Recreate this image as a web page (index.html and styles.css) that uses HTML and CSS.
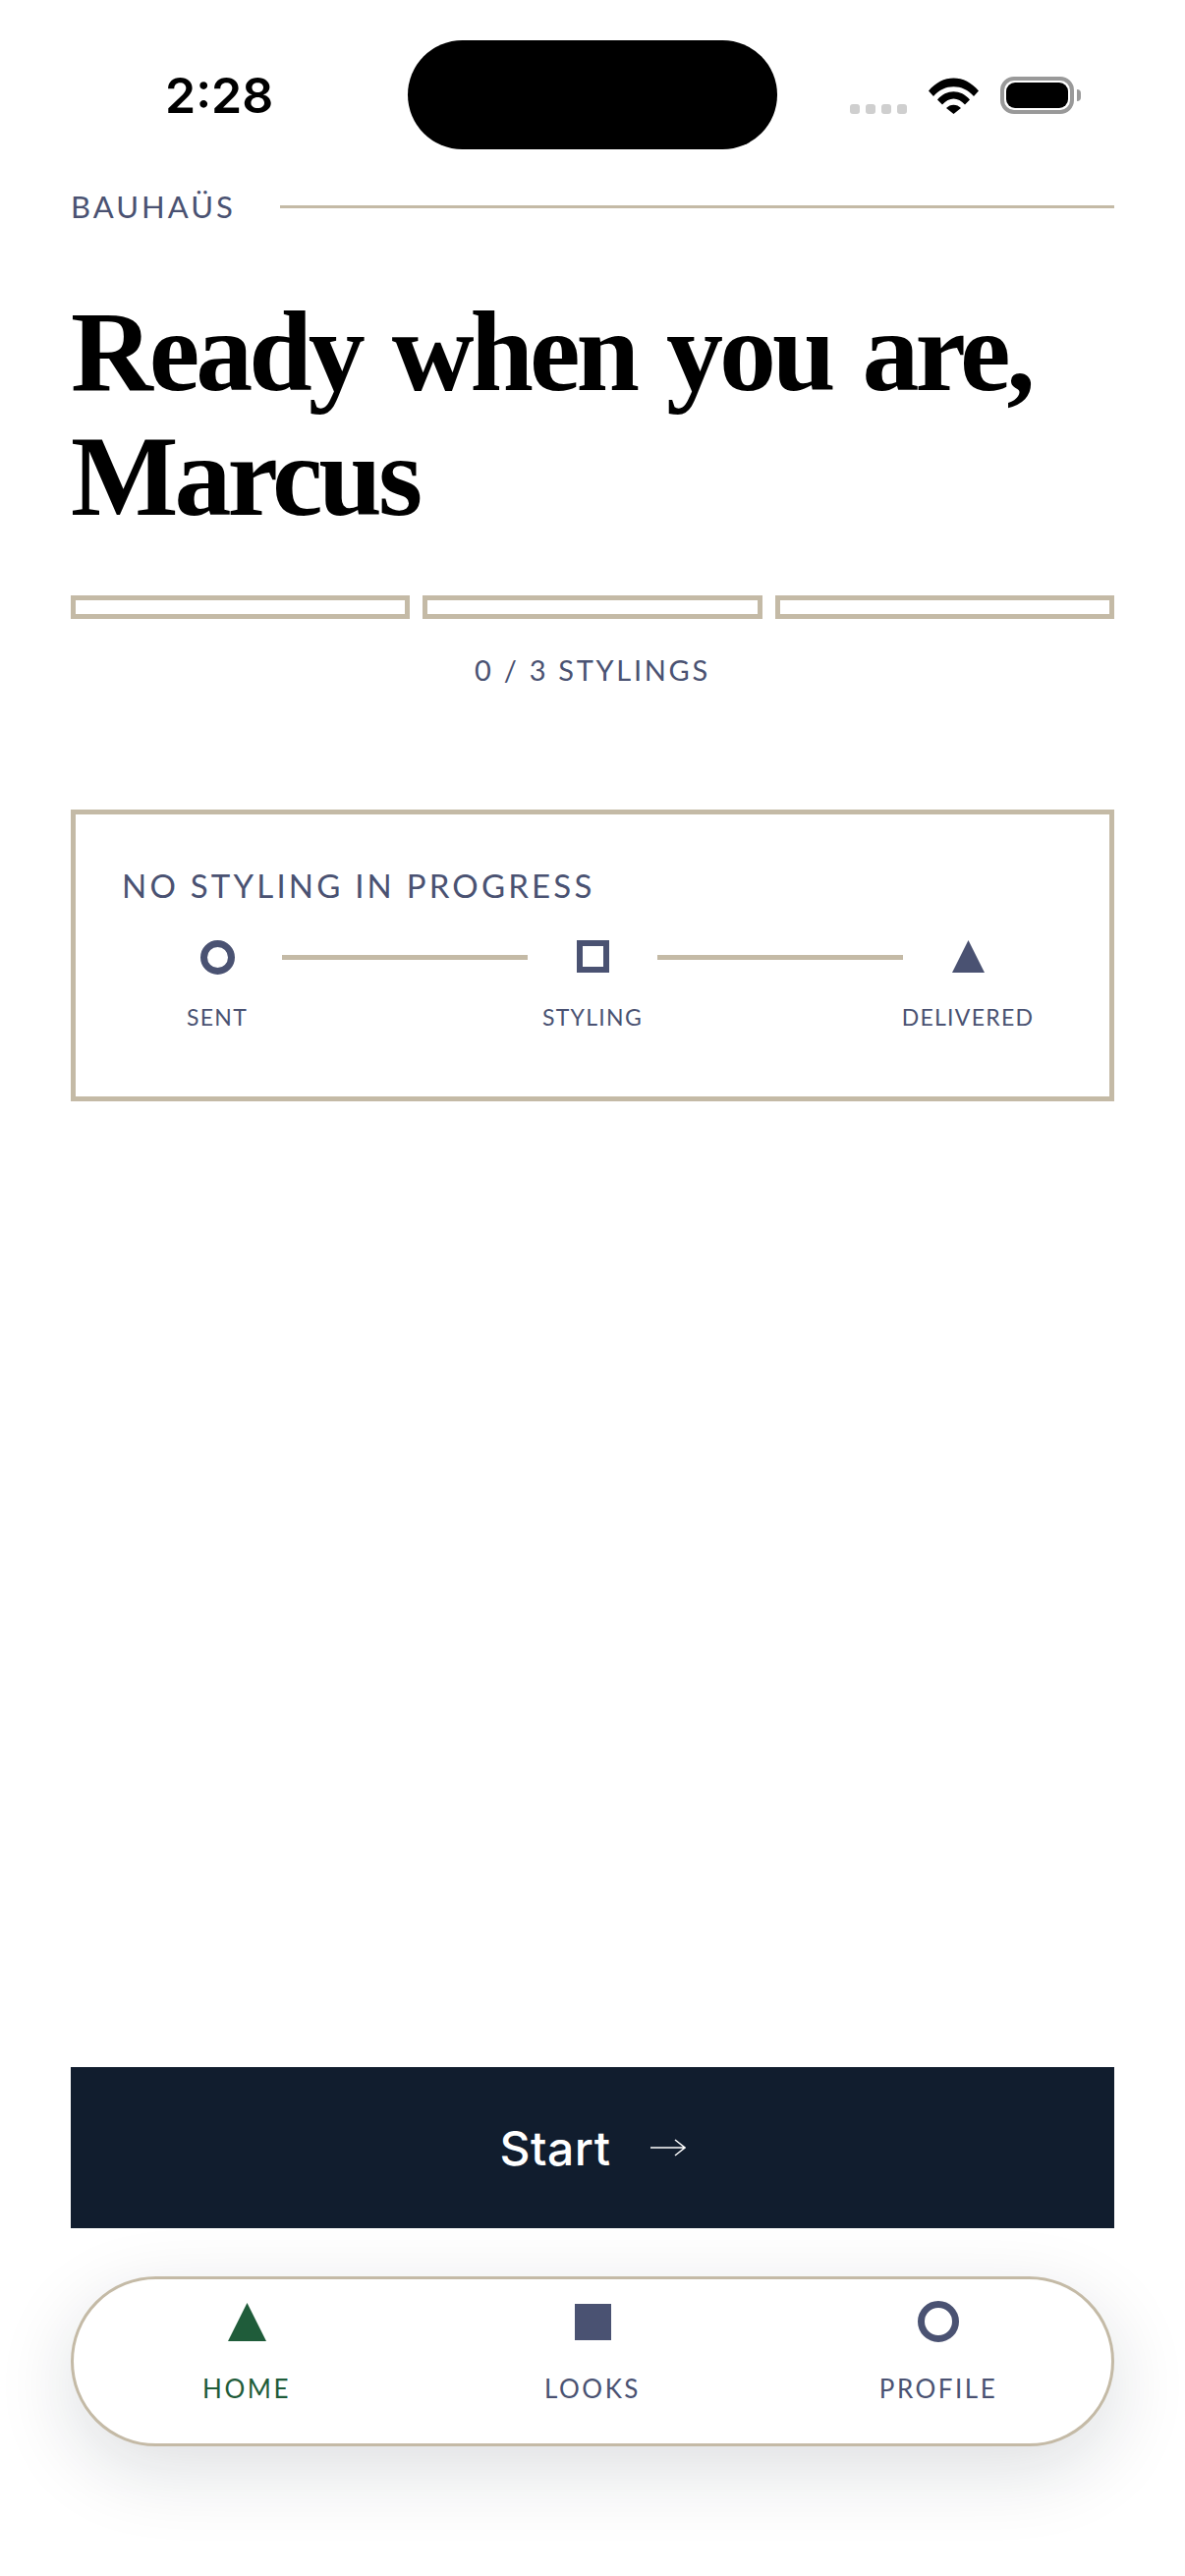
FILE: index.html
```html
<!DOCTYPE html>
<html lang="en">
<head>
    <meta charset="UTF-8">
    <meta name="viewport" content="width=device-width, initial-scale=1.0">
    <title>Bauhaüs</title>
    <link rel="stylesheet" href="styles.css">
</head>
<body>
<div class="status-bar">
    <div class="time">2:28</div>
    <div class="island"></div>
    <div class="status-icons">
        <div class="signal"><span></span><span></span><span></span><span></span></div>
        <svg class="wifi" width="51" height="37" viewBox="0 0 51 37">
            <path d="M0 13.5C14-4 37-4 51 13.5L46 19C35 6 16 6 5 19Z"/>
            <path d="M9 22.5C18 11.500 33 11.500 42 22.500L37 27.500C30 19.500 21 19.500 14 27.500Z"/>
            <path d="M18 31C22 26.500 29 26.500 33 31L25.500 37Z"/>
        </svg>
        <div class="battery"><div class="battery-level"></div></div>
        <div class="battery-cap"></div>
    </div>
</div>

<main class="content">
    <div class="brand">
        <span class="brand-name">BAUHAÜS</span>
        <span class="brand-rule"></span>
    </div>

    <h1>Ready when you are,<br>Marcus</h1>

    <div class="progress">
        <div class="progress-bar"></div>
        <div class="progress-bar"></div>
        <div class="progress-bar"></div>
    </div>
    <p class="progress-label">0 / 3 STYLINGS</p>

    <section class="card">
        <h2>NO STYLING IN PROGRESS</h2>
        <div class="stepper">
            <div class="step">
                <span class="shape circle"></span>
                <span class="step-label">SENT</span>
            </div>
            <span class="connector"></span>
            <div class="step">
                <span class="shape square"></span>
                <span class="step-label">STYLING</span>
            </div>
            <span class="connector"></span>
            <div class="step">
                <svg class="shape" viewBox="0 0 33 33"><polygon points="16.500,0 33,33 0,33"/></svg>
                <span class="step-label">DELIVERED</span>
            </div>
        </div>
    </section>

    <button class="start-button" type="button">
        <span>Start</span>
        <svg width="36" height="18" viewBox="0 0 36 18" fill="none" stroke="white" stroke-width="1.500">
            <path d="M0 9H35M25 1L35 9L25 17"/>
        </svg>
    </button>
</main>

<nav class="tab-bar">
    <a class="tab active">
        <span class="tab-icon">
            <svg width="39" height="39" viewBox="0 0 39 39"><polygon points="19.500,0 39,39 0,39"/></svg>
        </span>
        <span class="tab-label">HOME</span>
    </a>
    <a class="tab">
        <span class="tab-icon"><span class="tab-square"></span></span>
        <span class="tab-label">LOOKS</span>
    </a>
    <a class="tab">
        <span class="tab-icon"><span class="tab-circle"></span></span>
        <span class="tab-label">PROFILE</span>
    </a>
</nav>
</body>
</html>
```

FILE: styles.css
```css
* {
    box-sizing: border-box;
}
body {
    font-family: Lato, "Noto Sans", sans-serif;
    background-color: white;
    color: #4a5272;
    margin: 0;
    height: 100vh;
    overflow: hidden;
    display: flex;
    flex-direction: column;
}

/* status bar */
.status-bar {
    display: grid;
    grid-template-columns: 1fr 376px 1fr;
    align-items: center;
    padding-top: 41px;
    height: 152px;
}
.time {
    font-family: Inter, sans-serif;
    font-size: 50px;
    font-weight: 600;
    color: black;
    padding-left: 168px;
}
.island {
    height: 111px;
    background-color: black;
    border-radius: 56px;
}
.status-icons {
    display: flex;
    align-items: flex-end;
    padding-left: 74px;
    padding-top: 1px;
}
.signal {
    display: flex;
    gap: 6px;
    margin-right: 22px;
}
.signal span {
    width: 10px;
    height: 10px;
    border-radius: 3px;
    background-color: #cfcfcf;
}
.wifi {
    margin-right: 22px;
    display: block;
}
.battery {
    width: 75px;
    height: 38px;
    padding: 2px;
    border: 4px solid #999;
    border-radius: 14px;
}
.battery-level {
    height: 100%;
    background-color: black;
    border-radius: 9px;
}
.battery-cap {
    width: 4px;
    height: 12px;
    margin: 0 0 13px 3px;
    background-color: #999;
    border-radius: 0 6px 6px 0;
}

/* main column */
.content {
    flex-grow: 1;
    display: flex;
    flex-direction: column;
    padding: 0 72px;
}
.brand {
    display: flex;
    align-items: center;
    gap: 45px;
    margin-top: 40px;
}
.brand-name {
    font-size: 31px;
    letter-spacing: 3px;
    line-height: 36px;
}
.brand-rule {
    flex-grow: 1;
    height: 3px;
    background-color: #c4baa6;
}
h1 {
    font-family: "Liberation Serif", serif;
    font-size: 116px;
    font-weight: 700;
    line-height: 127px;
    color: black;
    margin: 67px 0 0;
    letter-spacing: -4px;
    word-spacing: 6px;
}
.progress {
    display: flex;
    gap: 13px;
    margin-top: 57px;
}
.progress-bar {
    flex: 1;
    height: 24px;
    border: 5px solid #c4baa6;
}
.progress-label {
    font-size: 29px;
    letter-spacing: 2.700px;
    line-height: 36px;
    text-align: center;
    margin: 34px 0 0;
}

/* status card */
.card {
    height: 297px;
    margin-top: 124px;
    padding: 52px 47px 0;
    border: 5px solid #c4baa6;
}
h2 {
    font-size: 33px;
    font-weight: 400;
    letter-spacing: 3.200px;
    line-height: 40px;
    margin: 0;
}
.stepper {
    display: flex;
    padding: 0 31px 0 31px;
    margin-top: 36px;
}
.step {
    width: 132px;
    display: flex;
    flex-direction: column;
    align-items: center;
    flex-shrink: 0;
}
.shape {
    display: block;
    width: 33px;
    height: 33px;
    fill: #4a5272;
}
.circle {
    width: 35px;
    height: 35px;
    border: 7px solid #4a5272;
    border-radius: 50%;
}
.square {
    border: 6px solid #4a5272;
}
.step-label {
    font-size: 23px;
    letter-spacing: 1.300px;
    line-height: 30px;
    margin-top: 30px;
}
.circle + .step-label {
    margin-top: 28px;
}
.connector {
    flex: 1;
    height: 5px;
    margin-top: 15px;
    background-color: #c4baa6;
}

/* bottom */
.start-button {
    display: flex;
    align-items: center;
    justify-content: center;
    gap: 40px;
    height: 164px;
    margin-top: auto;
    border: none;
    background-color: #111d2e;
    color: white;
    font-family: Inter, sans-serif;
    font-size: 48px;
    font-weight: 500;
    letter-spacing: 0.500px;
}
.tab-bar {
    display: flex;
    height: 173px;
    margin: 49px 72px 132px;
    border: 3px solid #c4baa6;
    border-radius: 87px;
    background-color: white;
    box-shadow: 0 24px 80px rgba(17, 29, 46, 0.14);
}
.tab {
    flex: 1;
    display: flex;
    flex-direction: column;
    align-items: center;
    padding-top: 22px;
    color: #4a5272;
    fill: #4a5272;
}
.tab.active {
    color: #1f5c3a;
    fill: #1f5c3a;
}
.tab-icon {
    height: 42px;
    display: flex;
    align-items: center;
}
.tab-icon svg {
    display: block;
}
.tab-square {
    display: block;
    width: 37px;
    height: 37px;
    background-color: #4a5272;
}
.tab-circle {
    display: block;
    width: 42px;
    height: 42px;
    border: 7px solid #4a5272;
    border-radius: 50%;
}
.tab-label {
    font-size: 26px;
    letter-spacing: 2.500px;
    line-height: 32px;
    margin-top: 31px;
}
```
